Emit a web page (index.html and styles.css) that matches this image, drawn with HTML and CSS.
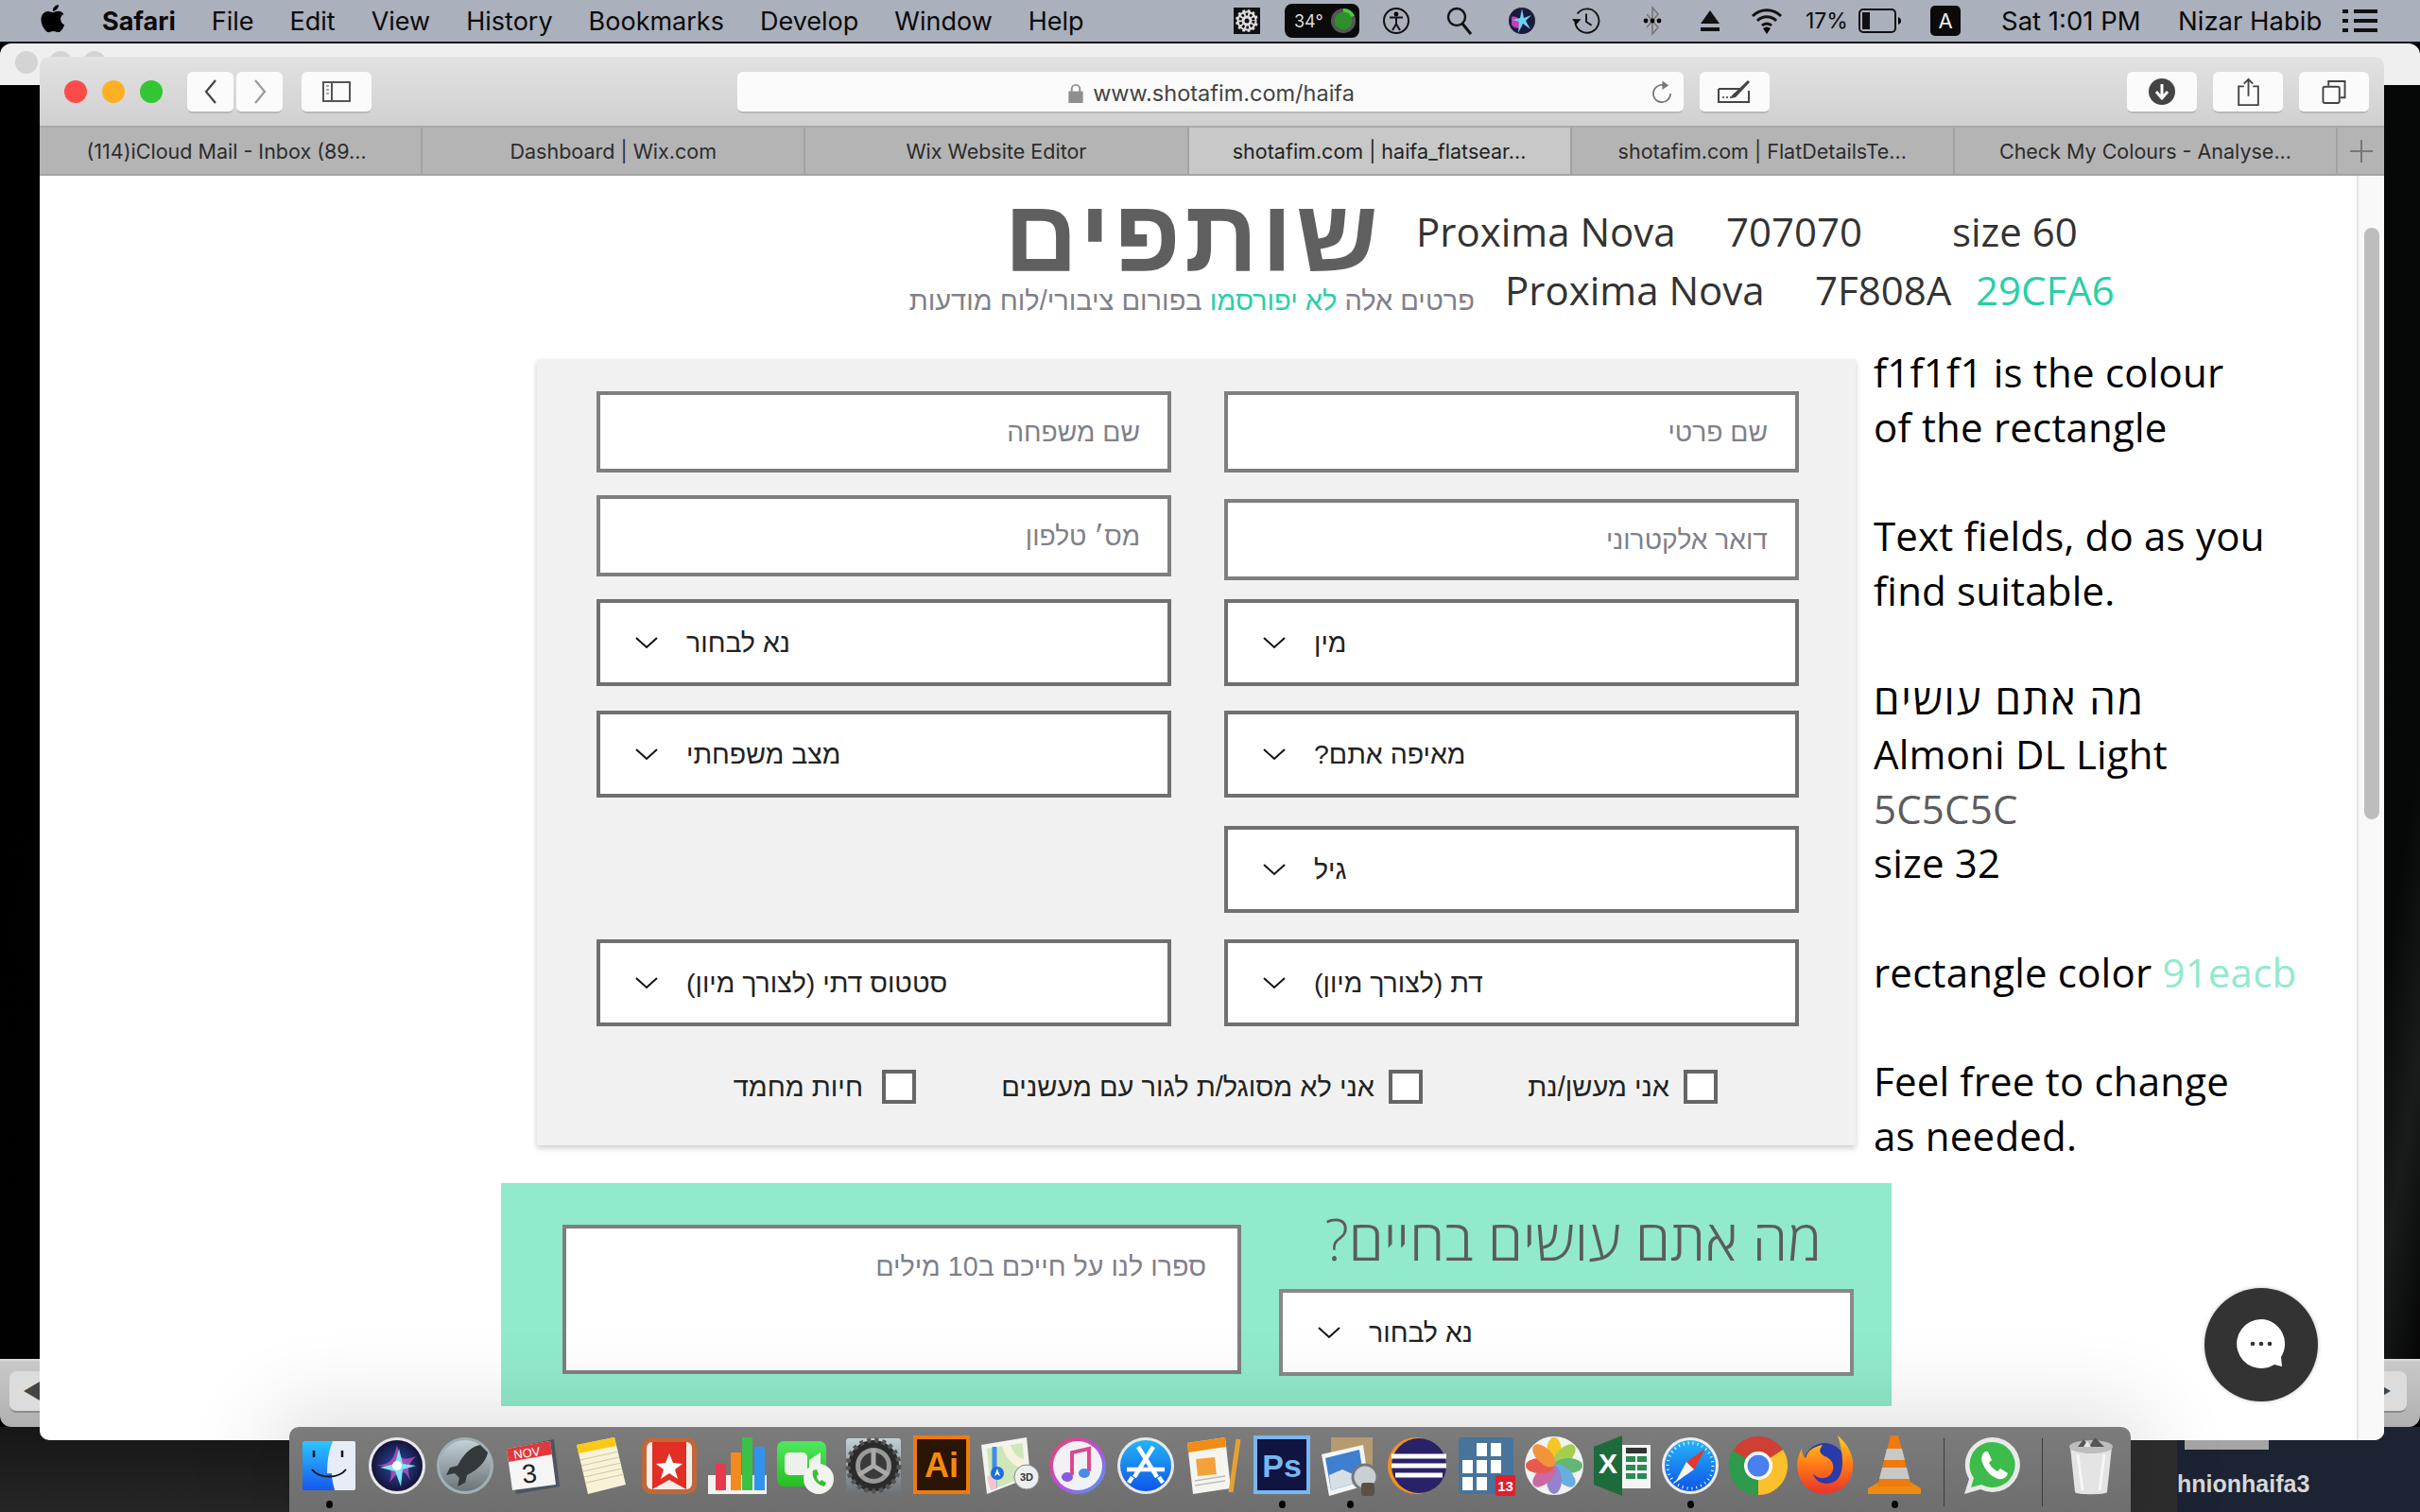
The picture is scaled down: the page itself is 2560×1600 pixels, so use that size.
FILE: index.html
```html
<!DOCTYPE html>
<html lang="en">
<head>
    <meta charset="UTF-8">
    <title>shotafim.com | haifa_flatsearch</title>
    <link rel="stylesheet" href="styles.css">
</head>
<body>

    <!-- shared gradients for the dock icons -->
    <svg class="defs" width="0" height="0">
        <defs>
            <linearGradient id="gFinder" x1="0" y1="0" x2="0" y2="1"><stop offset="0" stop-color="#2bc6ff"/><stop offset="1" stop-color="#1558ee"/></linearGradient>
            <linearGradient id="gSteel" x1="0" y1="0" x2="0" y2="1"><stop offset="0" stop-color="#c3d0d6"/><stop offset="1" stop-color="#6b7378"/></linearGradient>
            <linearGradient id="gStore" x1="0" y1="0" x2="0" y2="1"><stop offset="0" stop-color="#25b4f8"/><stop offset="1" stop-color="#0d55e8"/></linearGradient>
            <linearGradient id="gFace" x1="0" y1="0" x2="0" y2="1"><stop offset="0" stop-color="#50e860"/><stop offset="1" stop-color="#24c020"/></linearGradient>
            <linearGradient id="gMusic" x1="0" y1="0" x2="1" y2="1"><stop offset="0" stop-color="#f2405e"/><stop offset=".55" stop-color="#b252e0"/><stop offset="1" stop-color="#3ea6f4"/></linearGradient>
            <linearGradient id="gFox" x1="0" y1="0" x2="0" y2="1"><stop offset="0" stop-color="#ffd21e"/><stop offset=".5" stop-color="#ff7a18"/><stop offset="1" stop-color="#e8322c"/></linearGradient>
            <radialGradient id="gSiri"><stop offset="0" stop-color="#2a4fa8"/><stop offset="1" stop-color="#16123a"/></radialGradient>
        </defs>
    </svg>

    <header class="menubar">
        <nav class="menu">
            <svg class="apple" viewBox="3.5 3 16 18" width="26" height="31"><path d="M17.05 20.28c-.98.95-2.05.8-3.08.35-1.09-.46-2.09-.48-3.24 0-1.44.62-2.2.44-3.06-.35C2.79 15.25 3.51 7.59 9.05 7.31c1.35.07 2.29.74 3.08.8 1.18-.24 2.31-.93 3.57-.84 1.51.12 2.65.72 3.4 1.8-3.12 1.87-2.38 5.98.48 7.13-.57 1.5-1.31 2.99-2.54 4.09zM12.03 7.25c-.15-2.23 1.66-4.07 3.74-4.25.29 2.58-2.34 4.5-3.74 4.25z"/></svg>
            <b>Safari</b><span>File</span><span>Edit</span><span>View</span><span>History</span><span>Bookmarks</span><span>Develop</span><span>Window</span><span>Help</span>
        </nav>
        <div class="status">
            <svg viewBox="0 0 30 30" width="30" height="30"><rect x="1" y="1" width="28" height="28" fill="#111"/><circle cx="15" cy="15" r="12" fill="#ddd"/><circle cx="15" cy="15" r="12" fill="none" stroke="#111" stroke-width="3" stroke-dasharray="3 3"/><circle cx="15" cy="15" r="7" fill="none" stroke="#111" stroke-width="3" stroke-dasharray="2.5 2"/><circle cx="15" cy="15" r="2.5" fill="#111"/></svg>
            <div class="temp"><span>34°</span><svg viewBox="0 0 30 30" width="28" height="28"><circle cx="15" cy="15" r="12" fill="#2f8f2a" stroke="#555" stroke-width="4"/><path d="M15 3a12 12 0 0 1 11 7" fill="none" stroke="#43d13a" stroke-width="4"/></svg></div>
            <svg viewBox="0 0 28 32" width="28" height="32"><circle cx="14" cy="16" r="13" fill="none" stroke="#111" stroke-width="2"/><circle cx="14" cy="9" r="2.4"/><path d="M7 12.5h14M14 12.5v7l-4 6.5M14 19.5l4 6.5" fill="none" stroke="#111" stroke-width="2"/></svg>
            <svg viewBox="0 0 28 32" width="28" height="32"><circle cx="11" cy="12" r="9" fill="none" stroke="#111" stroke-width="2.4"/><path d="M17 19l9 11" stroke="#111" stroke-width="3"/></svg>
            <svg viewBox="0 0 28 32" width="28" height="32"><circle cx="14" cy="16" r="14" fill="#1b1a3e"/><path d="M3 12c6-2 9 4 11 8s-8 6-11 0z" fill="#c33fb0"/><path d="M14 3l2 10 8-3-6 6 5 9-8-6-5 10 1-12-7-2 8-2z" fill="#68d4f0"/></svg>
            <svg viewBox="0 0 32 32" width="30" height="32"><path d="M6 8a13.5 13.5 0 1 1-2.5 10" fill="none" stroke="#111" stroke-width="2"/><path d="M0 14l5 6 5-6z"/><path d="M16 8v9l6 4" fill="none" stroke="#111" stroke-width="2"/></svg>
            <svg viewBox="0 0 20 32" width="20" height="32"><path d="M4 9l12 14-6 7V2l6 7L4 23" fill="none" stroke="#777" stroke-width="1.6"/><circle cx="3" cy="16" r="2.4"/><circle cx="10" cy="16" r="2.4"/><circle cx="17" cy="16" r="2.4"/></svg>
            <svg viewBox="0 0 24 24" width="24" height="24"><path d="M12 1l10 14H2zM2 19h20v4H2z" fill="#111"/></svg>
            <svg viewBox="0 0 34 30" width="34" height="30"><path d="M2 10a21 21 0 0 1 30 0M7 15a14 14 0 0 1 20 0M12 20a7 7 0 0 1 10 0" fill="none" stroke="#111" stroke-width="3"/><path d="M17 29l-4-6a6 6 0 0 1 8 0z"/></svg>
            <span class="small">17%</span>
            <svg viewBox="0 0 46 26" width="46" height="26"><rect x="1" y="1" width="38" height="24" rx="4" fill="none" stroke="#111" stroke-width="2"/><rect x="4" y="4" width="8" height="18" fill="#111"/><path d="M42 9c2 1 3 2 3 4s-1 3-3 4z"/></svg>
            <div class="input-src">A</div>
            <span>Sat 1:01 PM</span>
            <span>Nizar Habib</span>
            <svg viewBox="0 0 37 26" width="37" height="26"><path d="M12 3h25M12 13h25M12 23h25" stroke="#111" stroke-width="4"/><path d="M0 3h6M0 13h6M0 23h6" stroke="#111" stroke-width="4"/></svg>
        </div>
    </header>

    <!-- window behind the browser, only its edges show -->
    <div class="back-window">
        <div class="back-title">
            <i></i><i></i><i></i>
        </div>
        <div class="back-media"></div>
        <div class="back-bar">
            <div class="back-btn">◄◄</div>
            <div class="back-btn back-next">►►</div>
        </div>
    </div>

    <div class="wallpaper">
        <div class="wall-dark"></div>
        <div class="wall-gap"></div>
        <div class="wall-navy">
            <div class="wall-thumb"></div>
            <span>hnionhaifa3</span>
        </div>
    </div>

    <div class="window">
        <div class="toolbar">
            <div class="lights"><i class="red"></i><i class="yellow"></i><i class="green"></i></div>
            <div class="pair">
                <button class="tbtn nav"><svg viewBox="0 0 16 26" width="16" height="26"><path d="M13 1L3 13l10 12" fill="none" stroke="#444" stroke-width="2.2"/></svg></button>
                <button class="tbtn nav"><svg viewBox="0 0 16 26" width="16" height="26"><path d="M3 1l10 12L3 25" fill="none" stroke="#9a9a9a" stroke-width="2.2"/></svg></button>
            </div>
            <button class="tbtn wide"><svg viewBox="0 0 30 22" width="30" height="22"><rect x="1" y="1" width="28" height="20" fill="none" stroke="#555" stroke-width="2"/><path d="M10 1v20" stroke="#555" stroke-width="2"/><path d="M4 5h3M4 9h3M4 13h3" stroke="#888" stroke-width="1.5"/></svg></button>
            <div class="urlbar">
                <div class="url">
                    <svg viewBox="0 0 18 22" width="18" height="21"><path d="M4.500 10V6.500a4.500 4.500 0 0 1 9 0V10" fill="none" stroke="#8f8f8f" stroke-width="2"/><rect x="1" y="9" width="16" height="13" fill="#8f8f8f"/></svg>
                    <span>www.shotafim.com/haifa</span>
                </div>
                <svg class="reload" viewBox="0 0 24 26" width="23" height="26"><path d="M15 6a9.500 9.500 0 1 0 7 9" fill="none" stroke="#777" stroke-width="1.800"/><path d="M13 1l7 5-7 5z" fill="#777"/></svg>
            </div>
            <button class="tbtn wide"><svg viewBox="0 0 36 26" width="36" height="26"><path d="M1 10h22M1 10v14h32V12" fill="none" stroke="#444" stroke-width="2"/><path d="M15 17l17-16 2 2-15 16-5 1z" fill="#444"/><path d="M5 19h10" stroke="#666" stroke-width="2" stroke-dasharray="2 2"/></svg></button>
            <div class="toolbar-right">
                <button class="tbtn wide"><svg viewBox="0 0 28 28" width="28" height="28"><circle cx="14" cy="14" r="14" fill="#444"/><path d="M14 6v13M8 14l6 7 6-7" fill="none" stroke="#fff" stroke-width="3"/></svg></button>
                <button class="tbtn wide"><svg viewBox="0 0 24 32" width="23" height="30"><path d="M7 10H1v21h22V10h-6" fill="none" stroke="#444" stroke-width="2"/><path d="M12 21V2M7 7l5-5 5 5" fill="none" stroke="#444" stroke-width="2"/></svg></button>
                <button class="tbtn wide"><svg viewBox="0 0 26 26" width="26" height="25"><rect x="1" y="7" width="18" height="18" rx="2" fill="none" stroke="#444" stroke-width="2"/><path d="M7 6V1h18v18h-5" fill="none" stroke="#444" stroke-width="2"/></svg></button>
            </div>
        </div>

        <div class="tabs">
            <div class="tab">(114)iCloud Mail - Inbox (89...</div>
            <div class="tab">Dashboard | Wix.com</div>
            <div class="tab">Wix Website Editor</div>
            <div class="tab active">shotafim.com | haifa_flatsear...</div>
            <div class="tab">shotafim.com | FlatDetailsTe...</div>
            <div class="tab">Check My Colours - Analyse...</div>
            <div class="tab-add"><svg viewBox="0 0 24 24" width="24" height="24"><path d="M12 0v24M0 12h24" stroke="#777" stroke-width="2"/></svg></div>
        </div>

        <main class="page">
            <div class="head-one">
                <h1 class="title" dir="rtl">שותפים</h1>
                <div class="spec"><span class="w-font">Proxima Nova</span><span class="w-hex">707070</span><span>size 60</span></div>
            </div>
            <div class="head-two">
                <p class="subtitle" dir="rtl">פרטים אלה <em>לא יפורסמו</em> בפורום ציבורי/לוח מודעות</p>
                <div class="spec"><span class="w-font">Proxima Nova</span><span class="w-hex2">7F808A</span><span class="mint">29CFA6</span></div>
            </div>

            <div class="body-row">
                <form class="card" dir="rtl">
                    <div class="grid">
                        <input class="field" placeholder="שם פרטי">
                        <input class="field" placeholder="שם משפחה">
                        <input class="field nudge" placeholder="דואר אלקטרוני">
                        <input class="field" placeholder="מס׳ טלפון">
                        <div class="pick"><svg viewBox="0 0 24 13" width="24" height="13"><path d="M1 1l11 10L23 1" fill="none" stroke="#111" stroke-width="2"/></svg><span>מין</span></div>
                        <div class="pick"><svg viewBox="0 0 24 13" width="24" height="13"><path d="M1 1l11 10L23 1" fill="none" stroke="#111" stroke-width="2"/></svg><span>נא לבחור</span></div>
                        <div class="pick"><svg viewBox="0 0 24 13" width="24" height="13"><path d="M1 1l11 10L23 1" fill="none" stroke="#111" stroke-width="2"/></svg><span>מאיפה אתם?</span></div>
                        <div class="pick"><svg viewBox="0 0 24 13" width="24" height="13"><path d="M1 1l11 10L23 1" fill="none" stroke="#111" stroke-width="2"/></svg><span>מצב משפחתי</span></div>
                        <div class="pick"><svg viewBox="0 0 24 13" width="24" height="13"><path d="M1 1l11 10L23 1" fill="none" stroke="#111" stroke-width="2"/></svg><span>גיל</span></div>
                        <div></div>
                        <div class="pick"><svg viewBox="0 0 24 13" width="24" height="13"><path d="M1 1l11 10L23 1" fill="none" stroke="#111" stroke-width="2"/></svg><span>דת (לצורך מיון)</span></div>
                        <div class="pick"><svg viewBox="0 0 24 13" width="24" height="13"><path d="M1 1l11 10L23 1" fill="none" stroke="#111" stroke-width="2"/></svg><span>סטטוס דתי (לצורך מיון)</span></div>
                    </div>
                    <div class="checks">
                        <label class="check"><input type="checkbox"><span>אני מעשן/נת</span></label>
                        <label class="check"><input type="checkbox"><span>אני לא מסוגל/ת לגור עם מעשנים</span></label>
                        <label class="check"><input type="checkbox"><span>חיות מחמד</span></label>
                    </div>
                </form>

                <aside class="notes">
                    <p>f1f1f1 is the colour<br>of the rectangle</p>
                    <p>Text fields, do as you<br>find suitable.</p>
                    <p><span class="he" dir="rtl">מה אתם עושים</span><br>Almoni DL Light<br><span class="grey">5C5C5C</span><br>size 32</p>
                    <p>rectangle color <span class="aqua">91eacb</span></p>
                    <p>Feel free to change<br>as needed.</p>
                </aside>
            </div>

            <section class="life" dir="rtl">
                <div class="life-col">
                    <h2>מה אתם עושים בחיים?</h2>
                    <div class="pick"><svg viewBox="0 0 24 13" width="24" height="13"><path d="M1 1l11 10L23 1" fill="none" stroke="#111" stroke-width="2"/></svg><span>נא לבחור</span></div>
                </div>
                <textarea class="story" placeholder="ספרו לנו על חייכם ב10 מילים"></textarea>
            </section>

            <div class="scrollbar"><div class="thumb"></div></div>

            <button class="chat">
                <svg viewBox="0 0 56 56" width="56" height="56"><path d="M28 1a26 26 0 1 0 14 48l8 2-1-10A26 26 0 0 0 28 1z" fill="#fff"/><circle cx="19" cy="27" r="2.300" fill="#333"/><circle cx="28" cy="27" r="2.300" fill="#333"/><circle cx="37" cy="27" r="2.300" fill="#333"/></svg>
            </button>
        </main>
    </div>

    <footer class="dock">
        <div class="app"><svg viewBox="0 0 64 64"><rect x="4" y="6" width="56" height="52" rx="2" fill="url(#gFinder)"/><path d="M36 6h22a2 2 0 0 1 2 2v48a2 2 0 0 1-2 2H38c-2-8-3-12-3-18h-5c0-14 2-24 6-34z" fill="#e6edf6"/><path d="M16 16v7M46 16v7" stroke="#111" stroke-width="2.500"/><path d="M14 36c8 10 28 10 36 0" fill="none" stroke="#111" stroke-width="2"/></svg><i class="dot"></i></div>
        <div class="app"><svg viewBox="0 0 64 64"><circle cx="32" cy="32" r="30" fill="#e8e8e8"/><circle cx="32" cy="32" r="27" fill="url(#gSiri)"/><path d="M32 10c3 14 4 18 20 12-8 8-10 12-6 26-6-12-10-14-22 2 4-14 2-18-14-18 14-2 18-4 22-22z" fill="#c84fc0" opacity=".8"/><path d="M34 14l4 16 14 2-14 4-2 18-6-16-16-4 16-4z" fill="#7ce6f6"/><circle cx="32" cy="32" r="5" fill="#fff"/></svg></div>
        <div class="app"><svg viewBox="0 0 64 64"><circle cx="32" cy="32" r="30" fill="#9fb0b6"/><circle cx="32" cy="32" r="27" fill="url(#gSteel)"/><path d="M48 10c-10 2-18 10-24 22l-8 2-4 8 9-2 5 5-2 9 8-4 2-8c12-6 20-14 22-24z" fill="#33383b"/></svg></div>
        <div class="app"><svg viewBox="0 0 64 64"><path d="M6 14L54 4l6 50-46 8z" fill="#4a5560"/><path d="M4 14L50 6l6 46-46 6z" fill="#f5f5f5"/><path d="M4 14L50 6l2 14L6 28z" fill="#e0383c"/><text x="26" y="23" class="cal-m" transform="rotate(-8 26 23)">NOV</text><text x="29" y="50" class="cal-d" transform="rotate(-6 29 50)">3</text></svg></div>
        <div class="app"><svg viewBox="0 0 64 64"><path d="M6 10L46 2l12 50-40 10z" fill="#f8f3d8"/><path d="M6 10L46 2l2 9L8 19z" fill="#fcc917"/><path d="M10 26l40-9M11 32l40-9M13 38l40-9M14 44l40-9M16 50l40-9" stroke="#ccc8a8" stroke-width="1"/></svg></div>
        <div class="app"><svg viewBox="0 0 64 64"><rect x="3" y="2" width="58" height="60" rx="10" fill="#c0683a"/><rect x="8" y="7" width="48" height="50" rx="6" fill="#f4efe8"/><path d="M14 7h36v50l-18-10-18 10z" fill="#e22f24"/><path d="M32 19l4 10 10 1-8 6 3 10-9-6-9 6 3-10-8-6 10-1z" fill="#fff"/></svg></div>
        <div class="app"><svg viewBox="0 0 64 64"><path d="M1 42h62v20H1z" fill="#f2f2f2"/><rect x="9" y="30" width="11" height="28" fill="#e8394c"/><rect x="25" y="18" width="11" height="40" fill="#f28a1e"/><rect x="37" y="2" width="11" height="56" fill="#3bc048"/><rect x="50" y="12" width="11" height="46" fill="#2f94ee"/></svg></div>
        <div class="app"><svg viewBox="0 0 64 64"><rect x="2" y="6" width="52" height="48" rx="7" fill="url(#gFace)"/><rect x="10" y="18" width="24" height="24" rx="5" fill="#eef0ec"/><path d="M36 26l12-8v24l-12-8z" fill="#eef0ec"/><circle cx="46" cy="46" r="16" fill="#f3f3f0"/><path d="M40 37c-2 8 4 15 12 17l2-4-5-3-2 2c-2-2-3-4-3-6l2-2-2-5z" fill="#34c02f"/></svg></div>
        <div class="app"><svg viewBox="0 0 64 64"><rect x="3" y="3" width="58" height="58" rx="3" fill="url(#gSteel)"/><circle cx="32" cy="32" r="27" fill="#2b2b2b"/><circle cx="32" cy="32" r="19" fill="#999"/><circle cx="32" cy="32" r="14" fill="#3a3a3a"/><path d="M32 32V14M32 32L16 42M32 32l16 10" stroke="#aaa" stroke-width="5"/><circle cx="32" cy="32" r="27" fill="none" stroke="#555" stroke-width="5" stroke-dasharray="4 4"/></svg></div>
        <div class="app"><svg viewBox="0 0 64 64"><rect x="2" y="0" width="60" height="62" fill="#f07b0b"/><rect x="6" y="4" width="52" height="54" fill="#2a1404"/><text x="32" y="44" class="ai">Ai</text></svg></div>
        <div class="app"><svg viewBox="0 0 64 64"><path d="M2 10L50 2l4 42-46 18z" fill="#f4f4ee"/><path d="M8 14L46 8l2 36-36 14z" fill="#cfe6b8"/><path d="M24 11c4 14 12 22 23 24v-10c-8-2-12-8-14-15z" fill="#f6f2dc"/><path d="M16 12v44" stroke="#3c8ee8" stroke-width="5"/><path d="M8 44l10-6v18l-6 2z" fill="#f4c4d0"/><circle cx="19" cy="40" r="7" fill="#1c6fd8"/><path d="M19 35l3 8-3-2-3 2z" fill="#fff"/><circle cx="50" cy="44" r="13" fill="#eceff0" stroke="#888"/><text x="50" y="48" class="d3">3D</text></svg></div>
        <div class="app"><svg viewBox="0 0 64 64"><circle cx="32" cy="32" r="30" fill="url(#gMusic)"/><circle cx="32" cy="32" r="26" fill="#f2f2f6"/><path d="M26 42V18l18-4v24" fill="none" stroke="#d94a8c" stroke-width="4"/><ellipse cx="21" cy="44" rx="6" ry="5" fill="#8a5ae0"/><ellipse cx="39" cy="40" rx="6" ry="5" fill="#4a8ae8"/></svg></div>
        <div class="app"><svg viewBox="0 0 64 64"><circle cx="32" cy="32" r="30" fill="#e8e8e8"/><circle cx="32" cy="32" r="27" fill="url(#gStore)"/><path d="M24 12l20 32M40 12L20 44M12 36h40M18 44l-4 6M46 44l4 6" stroke="#fff" stroke-width="4.500" fill="none"/></svg></div>
        <div class="app"><svg viewBox="0 0 64 64"><path d="M4 8L44 2l6 54-40 6z" fill="#f5f5f0"/><path d="M4 8L44 2l1 10L5 18z" fill="#f28c12"/><rect x="14" y="24" width="20" height="18" fill="#f4a13a" transform="rotate(-6 24 33)"/><path d="M12 48l32-5M12 53l32-5" stroke="#bbb" stroke-width="1.500"/><path d="M58 4L50 60" stroke="#e8a030" stroke-width="5"/></svg></div>
        <div class="app"><svg viewBox="0 0 64 64"><rect x="2" y="0" width="60" height="62" fill="#7ab6f0"/><rect x="6" y="4" width="52" height="54" fill="#0f1440"/><text x="32" y="44" class="ps">Ps</text></svg><i class="dot"></i></div>
        <div class="app"><svg viewBox="0 0 64 64"><rect x="12" y="2" width="44" height="46" fill="#b79a6e"/><path d="M2 20l44-10 6 42-42 12z" fill="#f4f6f8"/><path d="M6 24l36-9 5 33-35 10z" fill="#3f7fd0"/><path d="M10 42l14-6 18 8 4 4-34 10z" fill="#d8dfe4"/><circle cx="48" cy="44" r="13" fill="#c8d0d4" stroke="#777" stroke-width="3"/><rect x="44" y="50" width="14" height="14" rx="3" fill="#5c5044"/></svg><i class="dot"></i></div>
        <div class="app"><svg viewBox="0 0 64 64"><circle cx="30" cy="32" r="30" fill="#f39120"/><circle cx="33" cy="32" r="29" fill="#2a2268"/><path d="M4 22h58M4 32h58M8 42h50" stroke="#fff" stroke-width="5"/></svg></div>
        <div class="app"><svg viewBox="0 0 64 64"><rect x="3" y="2" width="58" height="60" rx="4" fill="#48739a"/><g fill="#fff"><rect x="22" y="8" width="11" height="14"/><rect x="37" y="8" width="11" height="14"/><rect x="7" y="26" width="11" height="14"/><rect x="22" y="26" width="11" height="14"/><rect x="37" y="26" width="11" height="14"/><rect x="7" y="44" width="11" height="14"/><rect x="22" y="44" width="11" height="14"/></g><rect x="42" y="42" width="21" height="22" rx="2" fill="#e01f2c"/><text x="52.500" y="59" class="badge">13</text></svg></div>
        <div class="app"><svg viewBox="0 0 64 64"><circle cx="32" cy="32" r="31" fill="#f2f2f2"/><g transform="translate(32 32)" opacity=".9"><ellipse cy="-15" rx="8" ry="15" fill="#f4c20d"/><ellipse cy="-15" rx="8" ry="15" fill="#9ccc3c" transform="rotate(45)"/><ellipse cy="-15" rx="8" ry="15" fill="#54b068" transform="rotate(90)"/><ellipse cy="-15" rx="8" ry="15" fill="#5aa8e0" transform="rotate(135)"/><ellipse cy="-15" rx="8" ry="15" fill="#8a78c8" transform="rotate(180)"/><ellipse cy="-15" rx="8" ry="15" fill="#c85a9a" transform="rotate(225)"/><ellipse cy="-15" rx="8" ry="15" fill="#e64a3c" transform="rotate(270)"/><ellipse cy="-15" rx="8" ry="15" fill="#f28a2a" transform="rotate(315)"/></g></svg></div>
        <div class="app"><svg viewBox="0 0 64 64"><rect x="24" y="10" width="38" height="46" fill="#f4f4f4"/><g fill="#2c8a52"><rect x="36" y="22" width="10" height="6"/><rect x="48" y="22" width="10" height="6"/><rect x="36" y="31" width="10" height="6"/><rect x="48" y="31" width="10" height="6"/><rect x="36" y="40" width="10" height="6"/><rect x="48" y="40" width="10" height="6"/></g><rect x="36" y="13" width="22" height="6" fill="#333"/><path d="M2 12L32 0v64L2 52z" fill="#1d6b3a"/><text x="17" y="40" class="xl">X</text></svg></div>
        <div class="app"><svg viewBox="0 0 64 64"><circle cx="32" cy="32" r="30" fill="#eee"/><circle cx="32" cy="32" r="27" fill="url(#gStore)"/><circle cx="32" cy="32" r="24" fill="none" stroke="#fff" stroke-width="3" stroke-dasharray="1 4"/><path d="M48 14L28 28l8 8z" fill="#e8362c"/><path d="M16 50l20-14-8-8z" fill="#f4f4f4"/></svg><i class="dot"></i></div>
        <div class="app"><svg viewBox="0 0 64 64"><circle cx="32" cy="32" r="31" fill="#cf3f33"/><path d="M32 32L58 15A31 31 0 0 1 32 63z" fill="#fbc02d"/><path d="M32 32L32 63A31 31 0 0 1 5 16z" fill="#2e9a4c"/><circle cx="32" cy="32" r="15" fill="#fff"/><circle cx="32" cy="32" r="11.500" fill="#4a80ee"/></svg></div>
        <div class="app"><svg viewBox="0 0 64 64"><circle cx="30" cy="30" r="22" fill="#2a3aa8"/><path d="M44 0c14 12 20 28 14 44C52 60 28 68 12 56 0 46-2 28 6 14c0 6 2 8 4 10 2-8 8-12 18-14-4 6-4 8 2 12 10 3 12 14 6 20-6 5-14 4-18-2 2 10 14 14 24 8 10-8 8-30 2-48z" fill="url(#gFox)"/></svg></div>
        <div class="app"><svg viewBox="0 0 64 64"><path d="M4 56l10-6h36l10 6v6H4z" fill="#ee8a10"/><path d="M28 0h8l14 54H14z" fill="#f07a0c"/><path d="M24 14h16l3 12H21zM19 34h26l3 12H16z" fill="#c8c8c8"/></svg><i class="dot"></i></div>
        <div class="sep"></div>
        <div class="app"><svg viewBox="0 0 64 64"><path d="M32 2a29 29 0 0 0-25 44L2 62l17-5A29 29 0 1 0 32 2z" fill="#e9e9e9"/><path d="M32 7a24 24 0 0 0-20 38l-3 10 11-3A24 24 0 1 0 32 7z" fill="#3dbb4b"/><path d="M24 17c-4 3-5 8-2 14 3 7 9 13 16 15 5 1 9-2 10-6l-8-5-3 3c-4-2-7-5-9-9l3-3-4-9z" fill="#fff"/></svg></div>
        <div class="sep"></div>
        <div class="app"><svg viewBox="0 0 64 64"><path d="M10 12h44l-5 48c-1 3-33 3-34 0z" fill="#e4e4e4"/><path d="M18 20l5 38M46 20l-5 38" stroke="#f6f6f6" stroke-width="3"/><ellipse cx="32" cy="12" rx="23" ry="7" fill="#bdbdbd"/><path d="M18 12l6-8 6 8 6-10 10 10z" fill="#555"/><path d="M24 12l4-6 4 6z" fill="#e8e8e8"/></svg></div>
    </footer>

</body>
</html>
```

FILE: styles.css
```css
/* --- Desktop --- */
html, body {
    margin: 0;
    padding: 0;
    width: 2560px;
    height: 1600px;
    overflow: hidden;
    position: relative;
    background-color: #000;
    font-family: "Inter", "Liberation Sans", sans-serif;
}

.defs {
    position: absolute;
}

button {
    font: inherit;
    padding: 0;
}

/* --- Menu bar --- */
.menubar {
    height: 44px;
    background-color: #aab0bc;
    border-bottom: 2px solid #10141c;
    display: flex;
    justify-content: space-between;
    align-items: center;
    font-size: 27px;
    color: #0a0a0a;
    position: relative;
    z-index: 3;
}

.menu {
    display: flex;
    align-items: center;
    gap: 38px;
    padding-left: 42px;
}

.apple {
    margin: -5px 2px 0 0;
}

.menu b {
    font-weight: 700;
}

.status {
    display: grid;
    grid-template-columns: 55px 104px 67px 66px 67px 75px 59px 55px 58px 56px 76px 75px 187px 174px 82px;
    align-items: center;
    white-space: nowrap;
    font-size: 27.5px;
}

.temp {
    width: 79px;
    height: 36px;
    background-color: #0a0a0a;
    border-radius: 8px;
    color: #ddd;
    font-size: 18px;
    display: flex;
    align-items: center;
    justify-content: space-between;
    padding: 0 3px 0 10px;
    box-sizing: border-box;
}

.small {
    font-size: 23px;
}

.input-src {
    width: 32px;
    height: 32px;
    background-color: #0a0a0a;
    color: #eee;
    border-radius: 5px;
    font-size: 22px;
    line-height: 32px;
    text-align: center;
}

/* --- Windows behind --- */
.back-window {
    position: absolute;
    left: 0;
    top: 46px;
    width: 2560px;
    height: 1464px;
    border-radius: 12px;
    overflow: hidden;
    display: flex;
    flex-direction: column;
    z-index: 1;
}

.back-title {
    height: 44px;
    background-color: #efefef;
    display: flex;
    gap: 12px;
    padding: 8px 0 0 16px;
    box-sizing: border-box;
}

.back-title i {
    width: 24px;
    height: 24px;
    border-radius: 50%;
    background-color: #d4d4d4;
}

.back-media {
    flex-grow: 1;
    background: linear-gradient(100deg, #000 0%, #060808 96%, #1a1c1c 98%, #050505 100%);
}

.back-bar {
    height: 72px;
    background: linear-gradient(#e0e0e0 0, #c8c8c8 5%, #b0b0b0 100%);
    display: flex;
    justify-content: space-between;
    padding: 13px 14px 0 10px;
    box-sizing: border-box;
}

.back-btn {
    width: 90px;
    height: 44px;
    padding-left: 14px;
    background-color: #dcdcdc;
    border-bottom: 2px solid #8c8c8c;
    border-radius: 8px;
    color: #444;
    font-size: 22px;
    line-height: 42px;
    box-sizing: border-box;
}

.back-next {
    padding: 0 16px 0 0;
    text-align: right;
}

.wallpaper {
    position: absolute;
    left: 0;
    top: 1510px;
    width: 2560px;
    height: 90px;
    display: flex;
    z-index: 0;
}

.wall-dark {
    width: 306px;
    background: linear-gradient(#161616, #262626);
}

.wall-gap {
    flex-grow: 1;
    background-color: #2e2e2e;
}

.wall-navy {
    width: 257px;
    background-color: #1c2333;
    color: #d8d8d8;
    font-family: "Liberation Sans", sans-serif;
    font-weight: 700;
    font-size: 25px;
}

.wall-navy span {
    display: block;
    margin-top: 22px;
}

.wall-thumb {
    width: 89px;
    height: 24px;
    margin-left: 8px;
    background-color: #a5a5a5;
}

/* --- Browser window --- */
.window {
    position: absolute;
    left: 42px;
    top: 60px;
    width: 2480px;
    height: 1464px;
    border-radius: 10px;
    overflow: hidden;
    display: flex;
    flex-direction: column;
    background-color: white;
    z-index: 2;
}

.toolbar {
    height: 75px;
    flex-shrink: 0;
    background: linear-gradient(#e2e2e2, #d0d0d0);
    border-bottom: 2px solid #a8a8a8;
    box-sizing: border-box;
    display: flex;
    align-items: flex-start;
    padding-top: 16px;
}

.lights {
    display: flex;
    gap: 16px;
    width: 156px;
    padding: 9px 0 0 26px;
    box-sizing: border-box;
}

.lights i {
    width: 24px;
    height: 24px;
    border-radius: 50%;
}

.red { background-color: #fc4c4a; }
.yellow { background-color: #fdb024; }
.green { background-color: #33c534; }

.pair {
    display: flex;
    gap: 3px;
    margin-right: 20px;
}

.tbtn {
    height: 44px;
    background-color: #fbfbfb;
    border: 0;
    border-bottom: 2px solid #b8b8b8;
    border-radius: 6px;
    display: flex;
    align-items: center;
    justify-content: center;
    box-sizing: border-box;
}

.nav { width: 49px; }
.wide { width: 74px; }

.urlbar {
    width: 1001px;
    height: 44px;
    margin-left: 387px;
    margin-right: 17px;
    background-color: #fbfbfb;
    border-bottom: 2px solid #b8b8b8;
    border-radius: 6px;
    box-sizing: border-box;
    display: flex;
    align-items: center;
    justify-content: center;
    position: relative;
}

.url {
    display: flex;
    align-items: center;
    gap: 9px;
    font-size: 23.5px;
    color: #444;
    padding-top: 3px;
    margin-left: 1px;
}

.reload {
    position: absolute;
    right: 12px;
    top: 8px;
}

.toolbar-right {
    display: flex;
    gap: 17px;
    margin-left: auto;
    margin-right: 16px;
}

.tabs {
    height: 51px;
    flex-shrink: 0;
    display: flex;
    background-color: #b4b4b4;
    border-bottom: 2px solid #a4a4a4;
    box-sizing: border-box;
}

.tab {
    flex: 1;
    text-align: center;
    font-size: 21.5px;
    line-height: 50px;
    color: #2c2c2c;
    border-right: 2px solid #a2a2a2;
    box-sizing: border-box;
    white-space: nowrap;
}

.tab:first-child {
    text-indent: -8px;
}

.tab.active {
    background-color: #c8c8c8;
    color: #222;
}

.tab-add {
    width: 49px;
    display: flex;
    align-items: center;
    justify-content: center;
}

/* --- Page content --- */
.page {
    flex-grow: 1;
    position: relative;
    overflow: hidden;
    font-family: "Open Sans", "Liberation Sans", sans-serif;
}

.head-one, .head-two {
    display: flex;
    align-items: flex-start;
}

.head-one {
    height: 92px;
    padding-left: 1030px;
}

.head-two {
    height: 102px;
    padding-left: 922px;
}

.title {
    margin: -2px 0 0 0;
    width: 390px;
    font-family: "Liberation Sans", sans-serif;
    font-size: 108px;
    font-weight: 700;
    line-height: 130px;
    letter-spacing: 4px;
    color: #5f5f5f;
    white-space: nowrap;
}

.subtitle {
    margin: 0;
    width: 596px;
    white-space: nowrap;
    font-family: "Liberation Sans", sans-serif;
    font-size: 29px;
    line-height: 40px;
    padding-top: 20px;
    color: #7f808a;
}

.subtitle em {
    font-style: normal;
    color: #29cfa6;
}

.spec {
    display: flex;
    font-size: 42px;
    line-height: 58px;
    color: #333;
    white-space: nowrap;
}

.head-one .spec {
    margin-left: 36px;
    margin-top: 30px;
}

.head-two .spec {
    margin-left: 32px;
    margin-top: 0;
}

.w-font { width: 328px; }
.w-hex { width: 239px; }
.w-hex2 { width: 170px; }

.mint {
    color: #29cfa6;
}

.body-row {
    display: flex;
    align-items: flex-start;
    height: 832px;
    padding-left: 526px;
}

.card {
    width: 1395px;
    height: 832px;
    flex-shrink: 0;
    box-sizing: border-box;
    padding: 34px 60px 0 63px;
    background-color: #f1f1f1;
    box-shadow: 0 3px 6px rgba(0, 0, 0, 0.2);
}

.grid {
    display: grid;
    grid-template-columns: 608px 608px;
    column-gap: 56px;
    grid-template-rows: 110px 110px 118px 122px 120px 92px;
    align-items: start;
}

.field {
    height: 86px;
    width: 608px;
    border: 4px solid #7f7f7f;
    background-color: white;
    box-sizing: border-box;
    padding: 0 29px;
    font-family: "Liberation Sans", sans-serif;
    font-size: 28.2px;
    outline: none;
    border-radius: 0;
}

.field::placeholder, .story::placeholder {
    color: #7f808a;
    opacity: 1;
}

.nudge {
    margin-top: 4px;
}

.pick {
    height: 92px;
    width: 608px;
    border: 4px solid #707070;
    background-color: white;
    box-sizing: border-box;
    display: flex;
    direction: ltr;
    align-items: center;
    gap: 30px;
    padding-left: 37px;
    font-family: "Liberation Sans", sans-serif;
    font-size: 28.5px;
    color: #222;
}

.pick span {
    direction: rtl;
}

.checks {
    display: grid;
    grid-template-columns: 312px 536px auto;
    margin-top: 46px;
    padding-right: 86px;
}

.check {
    display: flex;
    align-items: center;
    gap: 15px;
    font-family: "Liberation Sans", sans-serif;
    font-size: 29px;
    color: #222;
    white-space: nowrap;
}

.check:last-child {
    gap: 20px;
}

.check input {
    appearance: none;
    width: 36px;
    height: 36px;
    margin: 0;
    border: 4px solid #666;
    background-color: white;
    box-sizing: border-box;
    flex-shrink: 0;
}

.notes {
    margin: -15px 0 0 19px;
    font-size: 42px;
    line-height: 57.7px;
    color: #000;
    white-space: nowrap;
    letter-spacing: 0.2px;
}

.notes p {
    margin: 0 0 57.7px 0;
}

.he {
    font-size: 44px;
    letter-spacing: 1.8px;
}

.grey {
    color: #5c5c5c;
}

.aqua {
    color: #91eacb;
}

.life {
    margin: 40px 0 0 488px;
    width: 1471px;
    height: 236px;
    box-sizing: border-box;
    padding: 44px 40px 0 0;
    background-color: #91eacb;
    display: flex;
    gap: 40px;
}

.life-col {
    width: 608px;
}

.life h2 {
    margin: -24px 34px 0 0;
    height: 92px;
    font-family: "Open Sans", "Liberation Sans", sans-serif;
    font-size: 60px;
    line-height: 78px;
    font-weight: 300;
    color: #5c5c5c;
    white-space: nowrap;
}

.life .pick {
    border-color: #888;
}

.story {
    width: 718px;
    height: 158px;
    box-sizing: border-box;
    border: 4px solid #7f7f7f;
    padding: 24px 33px;
    background-color: white;
    font-family: "Liberation Sans", sans-serif;
    font-size: 28.7px;
    resize: none;
    outline: none;
    border-radius: 0;
}

.scrollbar {
    position: absolute;
    right: 0;
    top: 0;
    bottom: 0;
    width: 29px;
    background-color: #f9f9f9;
    border-left: 2px solid #e4e4e4;
    box-sizing: border-box;
}

.thumb {
    width: 16px;
    height: 626px;
    margin: 55px 0 0 6px;
    border-radius: 8px;
    background-color: #bdbdbd;
}

.chat {
    position: absolute;
    left: 2290px;
    top: 1177px;
    width: 120px;
    height: 120px;
    border: 0;
    border-radius: 50%;
    background-color: #333;
    box-shadow: 0 0 4px rgba(0, 0, 0, 0.25);
    display: flex;
    align-items: center;
    justify-content: center;
}

/* --- Dock --- */
.dock {
    position: absolute;
    left: 306px;
    top: 1510px;
    width: 1948px;
    height: 90px;
    box-sizing: border-box;
    padding: 9px 0 0 6px;
    background: linear-gradient(#7c7c7c, #6e6e6e);
    border-radius: 10px 10px 0 0;
    box-shadow: 0 0 90px 20px rgba(0, 0, 0, 0.12);
    display: flex;
    z-index: 4;
}

.app {
    width: 72px;
    flex-shrink: 0;
    display: flex;
    flex-direction: column;
    align-items: center;
    gap: 5px;
}

.app svg {
    width: 64px;
    height: 64px;
    flex-shrink: 0;
}

.dot {
    width: 7px;
    height: 8px;
    border-radius: 50%;
    background-color: #000;
}

.sep {
    width: 32px;
    position: relative;
}

.sep::after {
    content: "";
    display: block;
    width: 1px;
    height: 72px;
    margin: 3px auto 0;
    background-color: #3c3c3c;
}

.cal-m { font: 13px "Liberation Sans", sans-serif; fill: #fff; text-anchor: middle; }
.cal-d { font: 28px "Liberation Sans", sans-serif; fill: #222; text-anchor: middle; }
.ai { font: 700 36px "Liberation Sans", sans-serif; fill: #f58a0a; text-anchor: middle; }
.ps { font: 700 34px "Liberation Sans", sans-serif; fill: #7ab6f0; text-anchor: middle; }
.d3 { font: 700 11px "Liberation Sans", sans-serif; fill: #333; text-anchor: middle; }
.badge { font: 700 15px "Liberation Sans", sans-serif; fill: #fff; text-anchor: middle; }
.xl { font: 700 30px "Liberation Sans", sans-serif; fill: #fff; text-anchor: middle; }
```
